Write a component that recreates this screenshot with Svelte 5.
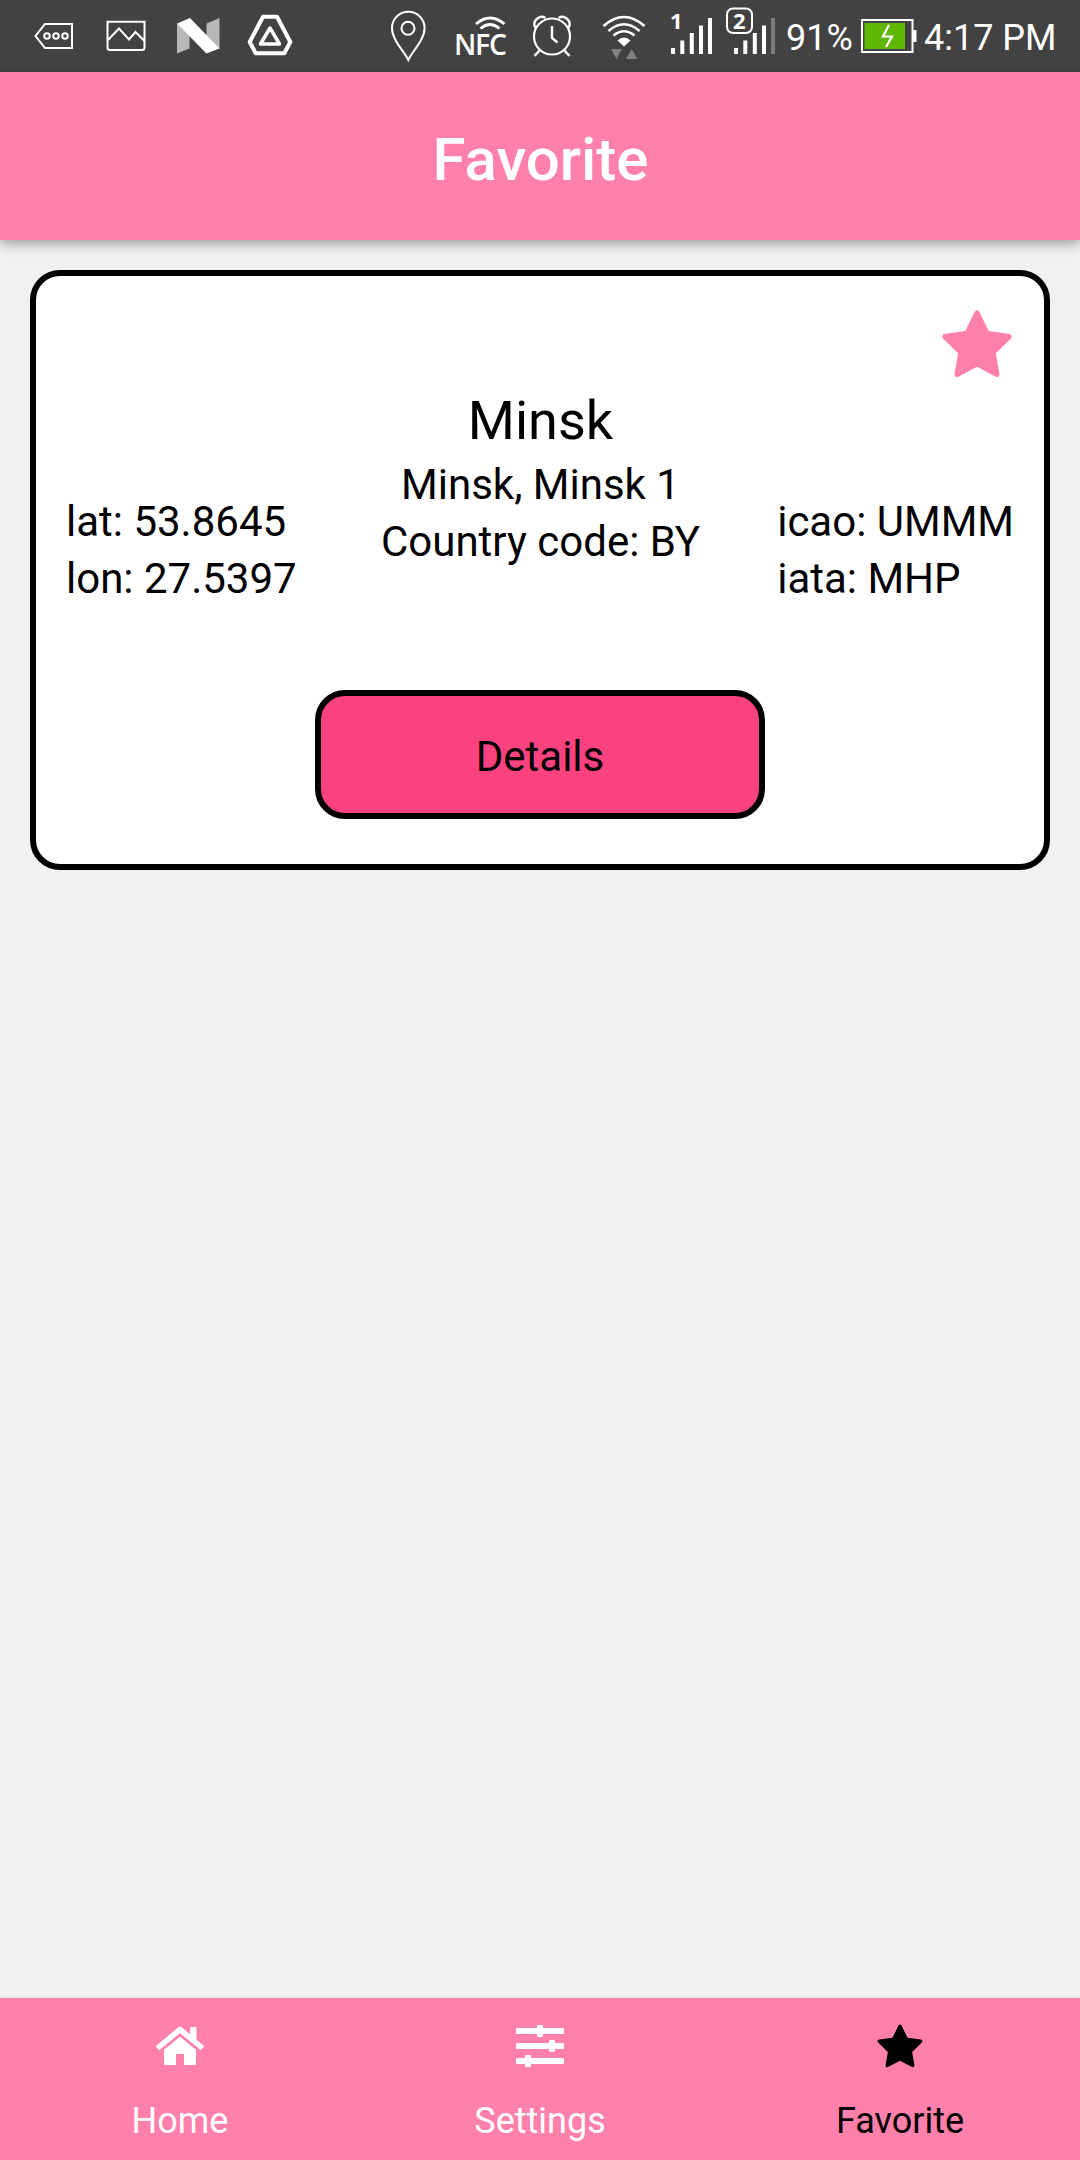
<script>
  const starPath =
    'M908.1 353.1l-253.9-36.9L540.7 86.1c-3.1-6.3-8.2-11.4-14.5-14.5-15.8-7.8-35-1.3-42.9 14.5L369.8 316.2l-253.9 36.9c-7 1-13.4 4.3-18.3 9.3a32.05 32.05 0 0 0 .6 45.3l183.7 179.1-43.4 252.9a31.95 31.95 0 0 0 46.4 33.7L512 754l227.1 119.4c6.2 3.3 13.4 4.4 20.3 3.2 17.4-3 29.1-19.5 26.1-36.9l-43.4-252.9 183.7-179.1c5-4.9 8.3-11.3 9.3-18.3 2.7-17.5-9.5-33.7-27-36.3z';

  const airport = {
    name: 'Minsk',
    city: 'Minsk, Minsk 1',
    country: 'BY',
    lat: '53.8645',
    lon: '27.5397',
    icao: 'UMMM',
    iata: 'MHP',
  };

  const tabs = [
    { id: 'home', label: 'Home' },
    { id: 'settings', label: 'Settings' },
    { id: 'favorite', label: 'Favorite' },
  ];
  let active = $state('favorite');
</script>

<div class="screen">
  <div class="status">
    <svg class="tray" viewBox="0 0 650 72" fill="none" stroke="#fff">
      <!-- message tag -->
      <path d="M45 24H72V48H45L35.500 36Z" stroke-width="2" />
      <g stroke-width="2">
        <circle cx="47" cy="36" r="2.800" />
        <circle cx="56" cy="36" r="2.800" />
        <circle cx="65" cy="36" r="2.800" />
      </g>
      <!-- picture -->
      <path d="M107.500 21.800H144.500V47.500Q144.500 50 142 50H110Q107.500 50 107.500 47.500Z" stroke-width="2" />
      <path d="M108 40L119 28.500L129 39.500L135.500 32L144.500 41" stroke-width="2" />
      <!-- letter-shaped ribbon -->
      <g stroke="none">
        <path d="M177 23.500L189.500 30V48.500L177 53.500Z" fill="#b8b8b8" />
        <path d="M206.500 23.500L219.500 18V49L206.500 43Z" fill="#b8b8b8" />
        <path d="M177 23.500L190 18L219.500 48.500L206.500 53.500Z" fill="#fff" />
      </g>
      <!-- drive triangle -->
      <path d="M263 16.800H277L290.300 42L284.300 53.200H255.700L249.700 42Z" stroke-width="4" stroke-linejoin="round" />
      <path d="M270 28L279.500 44H260.500Z" stroke-width="3.500" stroke-linejoin="round" />
      <!-- location -->
      <path d="M408.300 60C404 51 392 40 392 28A16.300 16.300 0 0 1 424.600 28C424.600 40 412.500 51 408.300 60Z" stroke-width="2" />
      <circle cx="408" cy="28.300" r="6.500" stroke-width="2" />
      <!-- nfc waves -->
      <path d="M476 24Q490 12 504.500 24M480.500 28.500Q490 20.500 499.500 28.500" stroke-width="2.700" />
      <!-- alarm -->
      <circle cx="552" cy="36.500" r="18" stroke-width="2.200" />
      <path d="M535.500 28A7.300 7.300 0 0 1 545.500 18M558.500 18A7.300 7.300 0 0 1 568.500 28M540 50L534.500 56M564 50L569.500 56M552 26V38L557.500 42.500" stroke-width="2.400" />
      <!-- wifi -->
      <path d="M603.500 26Q624 8 644.500 26M608.500 31Q624 17.500 639.500 31M613.500 35.500Q624 27 634.500 35.500" stroke-width="2.600" />
      <path d="M617.500 40.500Q624 34.500 630.500 40.500L624 46.500Z" fill="#fff" stroke="none" />
      <path d="M611 49H622L616.500 59ZM626 59H637.500L631.700 49Z" fill="#808080" stroke="none" />
      <text class="nfc" x="454" y="54.500" textLength="53">NFC</text>
    </svg>
    <svg class="signal" viewBox="650 0 130 72" fill="#fff">
      <path d="M671 48h4v6h-4zM680.300 40.500h4v13.500h-4zM689.800 33h4v21h-4zM699 25.500h4v28.500h-4zM708 18h4v36h-4z" />
      <path d="M734 48h4v6h-4zM743.300 40.500h4v13.500h-4zM752.800 33h4v21h-4zM762 25.500h4v28.500h-4z" />
      <path d="M771 18h4v36h-4z" fill="#7b7b7b" />
      <rect x="727" y="8.500" width="25" height="24.500" rx="6" fill="none" stroke="#fff" stroke-width="2" />
      <text class="sim" x="670" y="28.600">1</text>
      <text class="sim" x="733" y="28.600">2</text>
    </svg>
    <span class="percent">91%</span>
    <svg class="battery" viewBox="0 0 56 36">
      <path d="M51 11h4.500v12h-4.500z" fill="#fff" />
      <rect x="1" y="1" width="50.500" height="32" fill="none" stroke="#fff" stroke-width="2" />
      <rect x="3.500" y="4" width="40.500" height="26" fill="#5fb700" />
      <path d="M28 6L22 17.500H31L25 28" fill="none" stroke="#fff" stroke-width="2.200" />
    </svg>
    <span class="time">4:17 PM</span>
  </div>

  <header>Favorite</header>

  <main>
    <article class="card">
      <button class="star" aria-label="Remove from favorites">
        <svg viewBox="0 0 1024 1024"><path d={starPath} /></svg>
      </button>
      <div class="info">
        <div class="side">
          <div>lat: {airport.lat}</div>
          <div>lon: {airport.lon}</div>
        </div>
        <div class="middle">
          <div class="name">{airport.name}</div>
          <div>{airport.city}</div>
          <div>Country code: {airport.country}</div>
        </div>
        <div class="side right">
          <div>icao: {airport.icao}</div>
          <div>iata: {airport.iata}</div>
        </div>
      </div>
      <button class="details">Details</button>
    </article>
  </main>

  <nav>
    {#each tabs as tab (tab.id)}
      <button class="tab" class:active={active === tab.id} onclick={() => (active = tab.id)}>
        {#if tab.id === 'home'}
          <svg viewBox="0 0 54 54">
            <path d="M27 15.700L43 28.800V42.800Q43 44 41.800 44H31V33H23V44H12.200Q11 44 11 42.800V28.800Z" />
            <path d="M24.800 6.700Q27 5 29.200 6.700L37.200 13.400V7Q37.200 6 38.200 6H42.500Q43.500 6 43.500 7V18.700L50.500 24.600Q51.300 25.200 50.600 26L48.600 28.500Q47.800 29.300 47 28.600L27 12.200L7 28.600Q6.200 29.300 5.400 28.500L3.400 26Q2.700 25.200 3.500 24.600Z" />
          </svg>
        {:else if tab.id === 'settings'}
          <svg viewBox="0 0 54 54">
            <rect x="3" y="7" width="48" height="6" rx="1" />
            <rect x="3" y="22" width="48" height="6" rx="1" />
            <rect x="3" y="37" width="48" height="6" rx="1" />
            <rect x="24" y="4" width="6" height="12" rx="1" />
            <rect x="36" y="19" width="6" height="12" rx="1" />
            <rect x="12" y="34" width="6" height="12" rx="1" />
          </svg>
        {:else}
          <svg viewBox="0 0 1024 1024"><path d={starPath} /></svg>
        {/if}
        <span>{tab.label}</span>
      </button>
    {/each}
  </nav>
</div>

<style>
  :global(body) {
    margin: 0;
  }
  .screen {
    width: 1080px;
    height: 2160px;
    display: flex;
    flex-direction: column;
    background: #f1f1f1;
    color: #000;
    font: 42px/57px Roboto, sans-serif;
    overflow: hidden;
  }
  button {
    border: 0;
    padding: 0;
    margin: 0;
    background: none;
    color: inherit;
    font: inherit;
  }
  svg {
    display: block;
    flex: none;
  }
  .status {
    height: 72px;
    flex: none;
    display: flex;
    align-items: center;
    background: #424242;
    color: #fff;
    font-size: 36px;
    white-space: nowrap;
  }
  .tray {
    width: 650px;
    height: 72px;
  }
  .nfc {
    font: 600 28.500px 'Open Sans', sans-serif;
    fill: #fff;
    stroke: none;
  }
  .signal {
    width: 130px;
    height: 72px;
  }
  .sim {
    font: 700 22px 'Noto Sans', sans-serif;
  }
  .percent {
    width: 66px;
    margin: 4px 0 0 6px;
  }
  .battery {
    width: 56px;
    height: 36px;
    margin: 2px 0 0 8.500px;
  }
  .time {
    margin: 4px 0 0 7.500px;
  }
  header {
    height: 168px;
    flex: none;
    display: flex;
    align-items: center;
    justify-content: center;
    padding: 6px 0 0 1px;
    box-sizing: border-box;
    background: #ff80ab;
    color: #fff;
    font-size: 60px;
    font-weight: 500;
    box-shadow: 0 4px 12px rgba(0, 0, 0, 0.34);
  }
  main {
    flex: 1;
    padding: 30px;
  }
  .card {
    height: 600px;
    box-sizing: border-box;
    padding: 29px 30px 45px;
    border: 6px solid #000;
    border-radius: 30px;
    background: #fff;
    display: flex;
    flex-direction: column;
    align-items: center;
  }
  .star {
    align-self: flex-end;
    margin-right: -4.500px;
  }
  .star svg {
    width: 84px;
    height: 84px;
    fill: #ff80ab;
  }
  .info {
    width: 100%;
    display: grid;
    grid-template-columns: 1fr auto 1fr;
    margin-top: -4px;
  }
  .side {
    padding-top: 108px;
    justify-self: start;
  }
  .right {
    justify-self: end;
  }
  .middle {
    text-align: center;
    padding-left: 1px;
  }
  .name {
    font-size: 54px;
    line-height: 71px;
  }
  .details {
    width: 450px;
    height: 129px;
    margin-top: auto;
    padding-top: 4px;
    border: 6px solid #000;
    border-radius: 30px;
    background: #fb4281;
  }
  nav {
    height: 162px;
    flex: none;
    display: flex;
    background: #ff80ab;
    color: #fff;
    box-shadow: 0 0 3px rgba(0, 0, 0, 0.15);
  }
  .tab {
    flex: 1;
    display: flex;
    flex-direction: column;
    align-items: center;
    padding-top: 23px;
    font-size: 36px;
    line-height: 48px;
  }
  .tab svg {
    width: 54px;
    height: 54px;
    fill: currentColor;
    margin-bottom: 22px;
  }
  .active {
    color: #000;
  }
</style>
